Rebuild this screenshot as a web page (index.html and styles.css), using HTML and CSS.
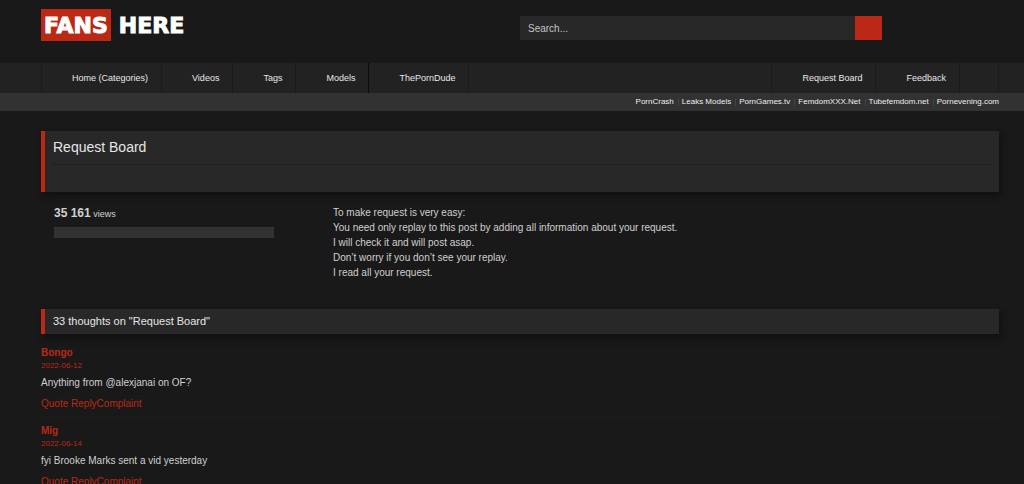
FILE: index.html
```html
<!DOCTYPE html>
<html lang="en">
<head>
<meta charset="utf-8">
<meta name="viewport" content="width=device-width, initial-scale=1">
<title>Request Board</title>
<link rel="stylesheet" href="styles.css">
</head>
<body>
<header class="header wrap">
  <a class="logo" href="#"><span class="logo-mark">FANS</span><span class="logo-rest">HERE</span></a>
  <form class="search">
    <input class="search-input" type="text" placeholder="Search..." aria-label="Search">
    <button class="search-button" type="submit" aria-label="Submit search"></button>
  </form>
</header>
<nav class="nav">
  <div class="wrap nav-row">
    <a class="nav-link" href="#">Home (Categories)</a>
    <a class="nav-link" href="#">Videos</a>
    <a class="nav-link" href="#">Tags</a>
    <a class="nav-link" href="#">Models</a>
    <a class="nav-link nav-link-strong" href="#">ThePornDude</a>
    <span class="nav-space"></span>
    <a class="nav-link" href="#">Request Board</a>
    <a class="nav-link" href="#">Feedback</a>
    <span class="nav-blank"></span>
  </div>
</nav>
<div class="partners">
  <div class="wrap partners-row">
    <a class="partner" href="#">PornCrash</a>
    <a class="partner" href="#">Leaks Models</a>
    <a class="partner" href="#">PornGames.tv</a>
    <a class="partner" href="#">FemdomXXX.Net</a>
    <a class="partner" href="#">Tubefemdom.net</a>
    <a class="partner" href="#">Pornevening.com</a>
  </div>
</div>
<main class="wrap">
  <section class="panel title-panel">
    <h1 class="title">Request Board</h1>
  </section>
  <div class="post">
    <div class="stats">
      <div class="views"><strong class="views-count">35 161</strong> views</div>
      <div class="bar"></div>
    </div>
    <p class="text">To make request is very easy:<br>You need only replay to this post by adding all information about your request.<br>I will check it and will post asap.<br>Don’t worry if you don’t see your replay.<br>I read all your request.</p>
  </div>
  <h2 class="panel thoughts">33 thoughts on "Request Board"</h2>
  <article class="comment">
    <h3 class="author">Bongo</h3>
    <time class="date">2022-06-12</time>
    <p class="message">Anything from @alexjanai on OF?</p>
    <div class="actions"><a href="#">Quote</a> <a href="#">Reply</a><a href="#">Complaint</a></div>
  </article>
  <article class="comment">
    <h3 class="author">Mig</h3>
    <time class="date">2022-06-14</time>
    <p class="message">fyi Brooke Marks sent a vid yesterday</p>
    <div class="actions"><a href="#">Quote</a> <a href="#">Reply</a><a href="#">Complaint</a></div>
  </article>
</main>
</body>
</html>
```
FILE: styles.css
```css
* { box-sizing: border-box; }
html { overflow: hidden auto; scrollbar-width: none; }
body {
  margin: 0;
  background: #191919;
  color: #d0d0d0;
  font: 10px/15px "Liberation Sans", Arial, sans-serif;
}
a { color: inherit; text-decoration: none; }
h1, h2, h3, p { margin: 0; font-weight: normal; }
.wrap { padding: 0 25px 0 41px; }

.header {
  display: grid;
  grid-template-columns: 1fr 1fr;
  align-items: start;
  padding-top: 9px;
  padding-bottom: 21px;
}
.logo {
  display: flex;
  gap: 8px;
  color: #fff;
  font: 900 22px/31px "DejaVu Sans", "Arial Black", sans-serif;
  -webkit-text-stroke: 1px #fff;
}
.logo-mark { padding: 1px 3px 0; background: #bc2816; }
.logo-rest { padding-top: 1px; }
.search { display: flex; max-width: 362px; margin-top: 7px; }
.search-input {
  flex: 1;
  min-width: 0;
  height: 24px;
  padding: 0 8px;
  border: 0;
  background: #282828;
  color: #d0d0d0;
  font: inherit;
}
.search-input::placeholder { color: #c4c4c4; opacity: 1; }
.search-button { width: 27px; height: 24px; padding: 0; border: 0; background: #bc2816; }

.nav { margin-top: 1px; background: #222; }
.nav-row { display: flex; color: #e8e8e8; font-size: 9px; line-height: 30px; }
.nav-link { padding: 0 13px 0 30px; border-left: 1px solid #1a1a1a; white-space: nowrap; }
.nav-link-strong { border-left-color: #0c0c0c; }
.nav-space { flex: 1; border-left: 1px solid #1a1a1a; }
.nav-blank { width: 40px; border: solid #1a1a1a; border-width: 0 1px; }

.partners { background: #323232; }
.partners-row {
  display: flex;
  justify-content: flex-end;
  color: #eee;
  font-size: 8px;
  line-height: 18px;
}
.partner { display: flex; align-items: center; white-space: nowrap; }
.partner + .partner::before {
  content: "";
  height: 7px;
  margin: 0 3px 0 4px;
  border-left: 1px solid #444;
}

.panel {
  border-left: 4px solid #bc2816;
  background: #282828;
  box-shadow: 2px 4px 6px #101010;
  color: #e6e6e6;
}
.title-panel { margin-top: 20px; padding: 0 8px 27px; }
.title { padding: 6px 0 7px; border-bottom: 1px solid #1e1e1e; font-size: 14px; line-height: 20px; }
.post { display: grid; grid-template-columns: 220px 1fr; gap: 59px; padding: 13px 13px 29px; }
.views { font-size: 9px; line-height: 16px; }
.views-count { font-size: 12px; }
.bar { height: 11px; margin-top: 5px; background: #323232; }
.thoughts { margin-bottom: 11px; padding: 0 8px; font-size: 11px; line-height: 25px; }

.comment { padding-bottom: 6px; border-bottom: 1px solid #1e1e1e; }
.comment + .comment { padding-top: 5px; }
.author { color: #bc2816; font-size: 10px; font-weight: bold; line-height: 15px; }
.date { display: block; color: #bc2816; font-size: 8px; line-height: 12px; }
.message { padding: 3px 0 6px; }
.actions { color: #bc2816; }
```
